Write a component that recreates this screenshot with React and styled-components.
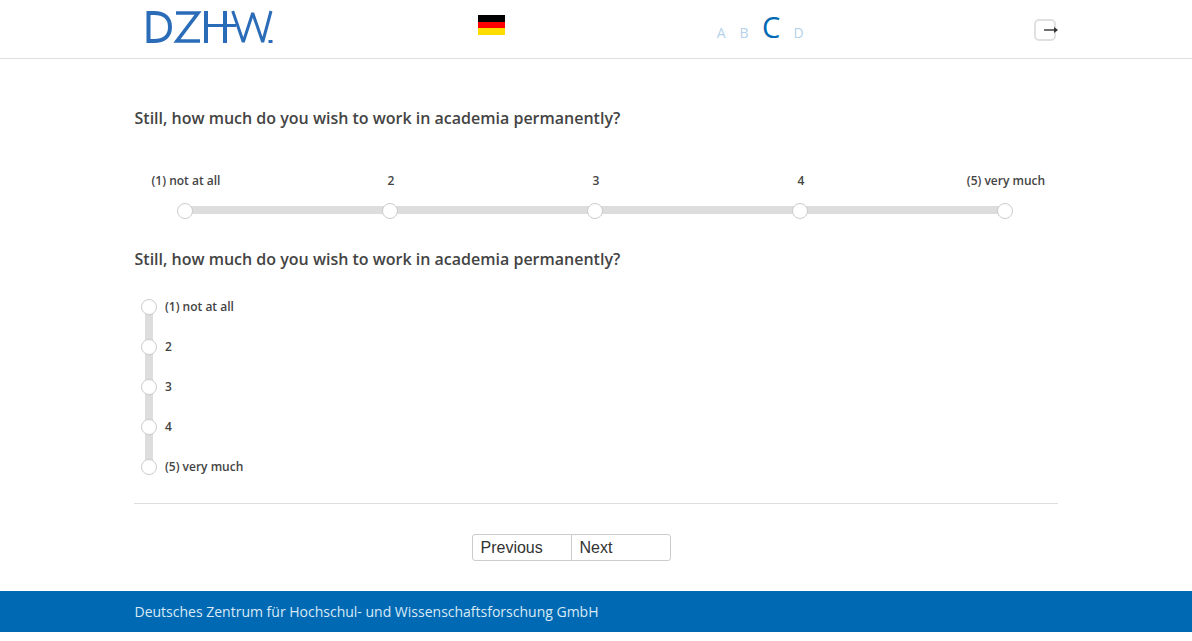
import React from "react";
import styled, { createGlobalStyle } from "styled-components";

const options = ["(1) not at all", "2", "3", "4", "(5) very much"];
const question = "Still, how much do you wish to work in academia permanently?";

export default function App() {
  return (
    <>
      <GlobalStyle />
      <Header>
        <HeaderInner>
          <LogoSlot>
            <svg width="130" height="36" viewBox="0 0 130 36" fill="none" stroke="#2b6cb8" strokeWidth="4">
              <path d="M4.500 1V33M3 3H10C20 3 26 8 26 17C26 26 20 31 10 31H3" />
              <path d="M32 3H54L33 31H56" strokeWidth="3.600" />
              <path d="M62 1V33M81 1V33" />
              <path d="M62 15.500H92" strokeWidth="3" />
              <path d="M88.700 1L99.300 32L108.700 3L118.700 32L127 1" strokeWidth="3" strokeLinejoin="bevel" />
              <path d="M124.500 30H128.500V33H124.500Z" fill="#2b6cb8" strokeWidth="0" />
            </svg>
          </LogoSlot>
          <FlagSlot>
            <Flag>
              <FlagStripe color="#000000" />
              <FlagStripe color="#ff0000" />
              <FlagStripe color="#ffdd00" />
            </Flag>
          </FlagSlot>
          <FontSizes>
            <SizeLetter>A</SizeLetter>
            <SizeLetter>B</SizeLetter>
            <SizeLetter $active>C</SizeLetter>
            <SizeLetter>D</SizeLetter>
          </FontSizes>
          <LogoutButton aria-label="Logout">
            <svg width="22" height="8" viewBox="0 0 22 8">
              <path d="M8 4H20" stroke="#333" strokeWidth="1.400" />
              <path d="M18 1L22 4L18 7Z" fill="#333" />
            </svg>
          </LogoutButton>
        </HeaderInner>
      </Header>
      <Main>
        <Question>{question}</Question>
        <HorizontalScale>
          {options.map((label) => (
            <ScaleColumn key={label}>
              <ColumnLabel>{label}</ColumnLabel>
              <ColumnKnob />
            </ScaleColumn>
          ))}
        </HorizontalScale>
        <Question $second>{question}</Question>
        <VerticalScale>
          {options.map((label) => (
            <ScaleRow key={label}>
              <Knob />
              <RowLabel>{label}</RowLabel>
            </ScaleRow>
          ))}
        </VerticalScale>
        <Divider />
        <Pager>
          <PagerButton>Previous</PagerButton>
          <PagerButton>Next</PagerButton>
        </Pager>
      </Main>
      <Footer>
        <FooterText>Deutsches Zentrum für Hochschul- und Wissenschaftsforschung GmbH</FooterText>
      </Footer>
    </>
  );
}

const GlobalStyle = createGlobalStyle`
  html, body {
    margin: 0;
    padding: 0;
    background: #fff;
    font-family: "Open Sans", sans-serif;
    color: #333;
  }
  * {
    box-sizing: border-box;
  }
`;

const Header = styled.header`
  height: 59px;
  border-bottom: 1px solid #ddd;
`;

const HeaderInner = styled.div`
  width: 924px;
  height: 58px;
  margin: 0 auto;
  display: flex;
`;

const LogoSlot = styled.div`
  width: 344px;
  padding: 10px 0 0 10px;
`;

const FlagSlot = styled.div`
  width: 238px;
  padding-top: 15px;
`;

const Flag = styled.div`
  width: 27px;
  height: 20px;
  display: flex;
  flex-direction: column;
`;

const FlagStripe = styled.div`
  flex: 1;
  background: ${(p) => p.color};
`;

const FontSizes = styled.div`
  width: 318px;
  display: flex;
  align-items: baseline;
  gap: 14px;
  padding: 8px 0 0 0.7px;
`;

const SizeLetter = styled.span`
  font-size: ${(p) => (p.$active ? "29px" : "14px")};
  line-height: 38px;
  margin: ${(p) => (p.$active ? "0 -0.7px" : "0")};
  color: ${(p) => (p.$active ? "#0069b4" : "#b3d2e9")};
`;

const LogoutButton = styled.button`
  width: 22px;
  height: 22px;
  margin-top: 19px;
  padding: 0;
  border: 2px solid #e0e0e0;
  border-radius: 5px;
  background: #fff;
  display: flex;
  align-items: center;
  overflow: visible;
  svg {
    flex: none;
  }
`;

const Main = styled.main`
  width: 924px;
  margin: 0 auto;
`;

const Question = styled.h2`
  margin: 0;
  padding-top: ${(p) => (p.$second ? "29px" : "48px")};
  padding-left: 0.5px;
  font-size: 16px;
  line-height: 22px;
  font-weight: 600;
  color: #444;
`;

const HorizontalScale = styled.div`
  position: relative;
  margin-top: 43px;
  display: grid;
  grid-template-columns: repeat(5, 205px);
  justify-content: center;
  &::before {
    content: "";
    position: absolute;
    left: 49px;
    right: 54px;
    bottom: 5px;
    height: 8px;
    background: #ddd;
  }
`;

const ScaleColumn = styled.div`
  position: relative;
  display: flex;
  flex-direction: column;
  align-items: center;
  gap: 13px;
`;

const ColumnLabel = styled.span`
  font-size: 12px;
  line-height: 18px;
  font-weight: 600;
  color: #444;
  white-space: nowrap;
`;

const Knob = styled.span`
  position: relative;
  flex: none;
  display: block;
  width: 16px;
  height: 16px;
  border: 1px solid #ccc;
  border-radius: 50%;
  background: #fff;
`;

const ColumnKnob = styled(Knob)`
  margin-right: 2px;
`;

const VerticalScale = styled.div`
  position: relative;
  margin: 29px 0 0 7px;
  display: flex;
  flex-direction: column;
  gap: 24px;
  &::before {
    content: "";
    position: absolute;
    left: 4px;
    top: 8px;
    bottom: 8px;
    width: 8px;
    background: #ddd;
  }
`;

const ScaleRow = styled.div`
  position: relative;
  display: flex;
  align-items: center;
  gap: 8px;
  height: 16px;
`;

const RowLabel = styled.span`
  font-size: 12px;
  line-height: 18px;
  font-weight: 600;
  color: #444;
`;

const Divider = styled.hr`
  margin: 28px 0 0;
  border: 0;
  border-top: 1px solid #ddd;
`;

const Pager = styled.div`
  margin-top: 30px;
  padding-right: 50px;
  display: flex;
  justify-content: center;
`;

const PagerButton = styled.button`
  width: 100px;
  height: 27px;
  padding: 0 8px;
  background: #fff;
  border: 1px solid #ccc;
  text-align: left;
  font-family: "Liberation Sans", Arial, sans-serif;
  font-size: 16px;
  color: #333;
  &:first-child {
    border-radius: 3px 0 0 3px;
  }
  &:last-child {
    margin-left: -1px;
    border-radius: 0 3px 3px 0;
  }
`;

const Footer = styled.footer`
  margin-top: 30px;
  height: 41px;
  background: #0069b4;
`;

const FooterText = styled.div`
  width: 924px;
  margin: 0 auto;
  padding-left: 0.5px;
  font-size: 14px;
  line-height: 41px;
  color: #d9e9f5;
`;
